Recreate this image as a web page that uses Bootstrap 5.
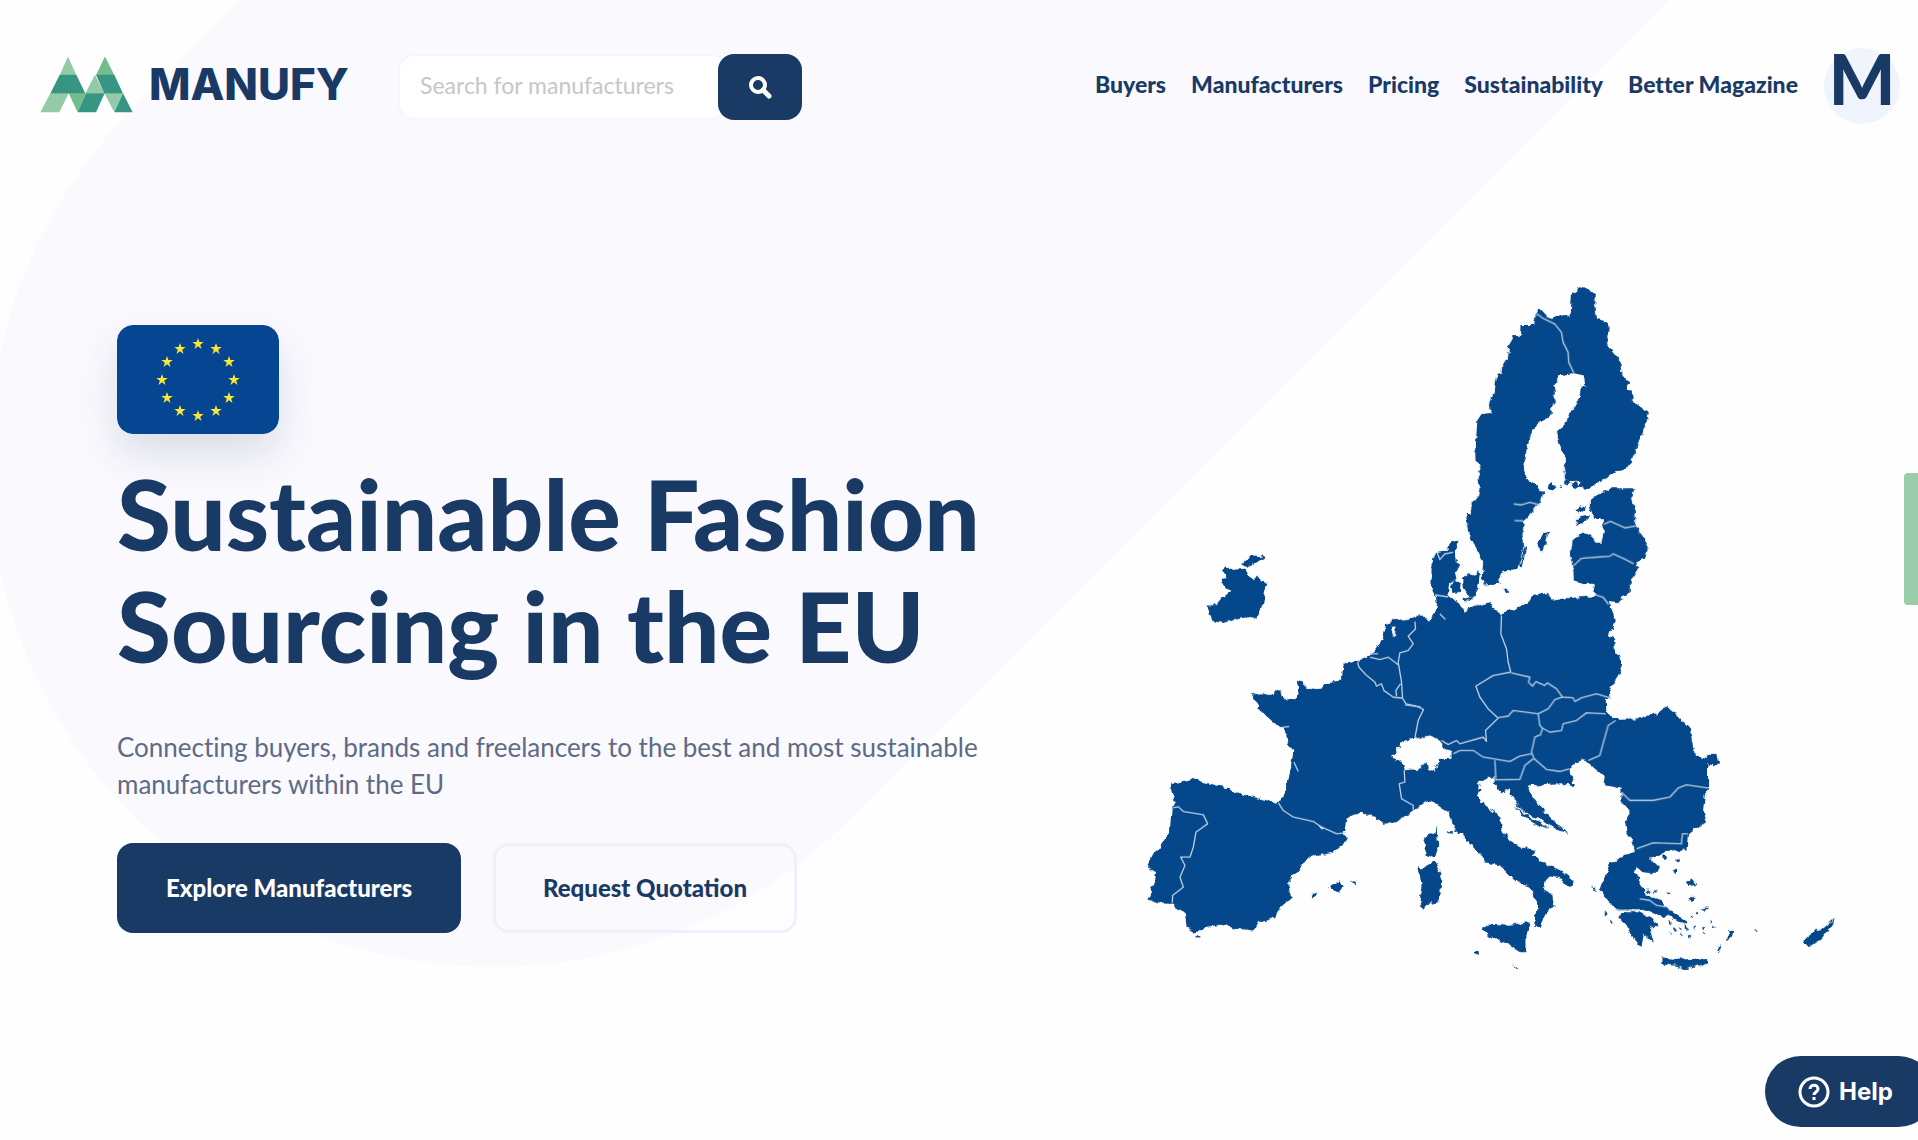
<!DOCTYPE html>
<html lang="en">
<head>
<meta charset="utf-8">
<meta name="viewport" content="width=device-width, initial-scale=1">
<title>Manufy</title>
<link href="https://cdn.jsdelivr.net/npm/bootstrap@5.3.0/dist/css/bootstrap.min.css" rel="stylesheet">
<style>
:root{--navy:#1a3a66}
body{font-family:Lato,"Open Sans",sans-serif;font-variant-ligatures:none;color:var(--navy);background:#fefefe}
.page-wrap{position:relative;min-height:100vh;overflow:hidden}
.blob{position:absolute;left:-12px;top:-43px;width:2200px;height:1010px;border-radius:505px;background:#faf9fe;transform-origin:505px 505px;transform:rotate(-45deg);z-index:0}
.page-wrap>header,.page-wrap>main{position:relative;z-index:1}
.site-header{padding:48px 18px 0 40px}
.brand-block{padding-top:6px}
.brand-link{padding-bottom:6px}
.brand-mark{width:93px;height:57px}
.brand-name{font:800 44px/48px Inter,sans-serif;color:var(--navy);width:204px}
.search-box{margin-left:47px}
.search-box .form-control{width:326px;height:62px;border:0;border-radius:14px;padding:0 20px 4px;font-size:23px;background:#fff;box-shadow:0 0 3px #ecebf7;margin-right:-8px}
.search-box .form-control::placeholder{color:#c6c6c8;opacity:1}
.search-box .btn{width:84px;height:66px;border-radius:16px;background:var(--navy);z-index:2}
.main-nav{gap:25px;margin-right:26px}
.main-nav .nav-link{padding:0;font-size:23px;line-height:32px;font-weight:900;color:var(--navy);white-space:nowrap}
.avatar{width:76px;height:76px;border-radius:50%;background:#eff4fd;font-size:70px;line-height:60px;font-weight:900;color:var(--navy);text-decoration:none}
.hero{padding:201px 68px 0 117px}
.flag{width:162px;height:109px;border-radius:16px;box-shadow:0 20px 40px rgba(26,58,102,.14);display:block}
.hero h1{font-size:98px;line-height:112px;font-weight:900;margin:23px 0 0}
.hero p{font-size:26px;line-height:37px;color:#5d6b86;margin:48px 0 40px}
.cta{height:90px;border-radius:16px;font-size:24px;font-weight:900;border-width:3px}
.cta-main,.cta-main:hover{background:var(--navy);color:#fff;width:344px}
.cta-alt,.cta-alt:hover{border-color:#f1effc;color:var(--navy);width:304px}
.map{width:37vw;margin-top:-46px;flex:none}
.side-tab{position:absolute;right:-8px;top:473px;width:22px;height:132px;border:0;border-radius:4px;background:#9bcdab;z-index:3}
.help{position:absolute;right:-16px;bottom:13px;height:71px;width:169px;border:0;border-radius:36px;background:var(--navy);color:#fff;font:700 24px/32px Inter,sans-serif;z-index:3;padding:0 0 0 32px}
</style>
</head>
<body>
<div class="page-wrap">
<div class="blob"></div>
<header class="site-header d-flex align-items-start justify-content-between">
  <div class="brand-block d-flex align-items-center">
    <a href="#" class="brand-link d-flex align-items-center text-decoration-none" aria-label="Manufy home">
      <svg class="brand-mark" viewBox="119 107 279 170"><g>
        <path fill="#93cba8" d="M203 108l25 56h-50zM150 218h55l-28 57h-57zM284 163l28 56h-57zM312 218h56l-26 57z"/>
        <path fill="#72bd8a" d="M205 218h52l-25 57zM314 108l28 56h-55z"/>
        <path fill="#379683" d="M178 163h50l27 56H150zM287 163h55l26 56h-56zM257 218h56l-26 57h-55zM368 218l29 57h-55z"/></g></svg>
      <span class="brand-name ms-3">MANUFY</span>
    </a>
    <form class="search-box d-flex align-items-center" onsubmit="return false">
      <input class="form-control" type="search" placeholder="Search for manufacturers" aria-label="Search for manufacturers">
      <button class="btn d-flex align-items-center justify-content-center" type="submit" aria-label="Search"><svg width="24" height="24" viewBox="0 0 24 24" fill="none" stroke="#fff" stroke-width="4"><circle cx="10" cy="10" r="7"/><path d="M15 15l6 6" stroke-width="5" stroke-linecap="round"/></svg></button>
    </form>
  </div>
  <div class="d-flex align-items-center">
    <nav class="main-nav d-flex pb-1">
      <a class="nav-link" href="#">Buyers</a><a class="nav-link" href="#">Manufacturers</a><a class="nav-link" href="#">Pricing</a><a class="nav-link" href="#">Sustainability</a><a class="nav-link" href="#">Better Magazine</a>
    </nav>
    <a class="avatar text-center" href="#">M</a>
  </div>
</header>
<main class="hero d-flex justify-content-between align-items-start">
  <div>
    <svg class="flag" viewBox="0 0 162 109" role="img" aria-label="European Union">
      <defs><path id="st" fill="#fbe635" d="M0-6L1.4-1.9H5.7L2.2.7 3.5 4.9 0 2.3-3.5 4.9-2.2.7-5.7-1.9H-1.4z"/></defs>
      <rect width="162" height="109" rx="16" fill="#064592"/>
      <g transform="translate(81 55)"><use href="#st" y="-36"/><use href="#st" x="18" y="-31"/><use href="#st" x="31" y="-18"/><use href="#st" x="36"/><use href="#st" x="31" y="18"/><use href="#st" x="18" y="31"/><use href="#st" y="36"/><use href="#st" x="-18" y="31"/><use href="#st" x="-31" y="18"/><use href="#st" x="-36"/><use href="#st" x="-31" y="-18"/><use href="#st" x="-18" y="-31"/></g>
    </svg>
    <h1>Sustainable Fashion<br>Sourcing in the EU</h1>
    <p>Connecting buyers, brands and freelancers to the best and most sustainable<br>manufacturers within the EU</p>
    <div class="d-flex"><button class="btn cta cta-main me-4" type="button">Explore Manufacturers</button><button class="btn cta cta-alt ms-2" type="button">Request Quotation</button></div>
  </div>
  <svg class="map" viewBox="1140 280 710 700" role="img" aria-label="Map of the European Union">
    <defs><filter id="coast" x="0" y="0" width="1" height="1" color-interpolation-filters="sRGB"><feTurbulence type="fractalNoise" baseFrequency=".16" numOctaves="2" seed="4"/><feDisplacementMap in="SourceGraphic" scale="6" xChannelSelector="R" yChannelSelector="G"/></filter></defs>
    <g fill="#05478b" filter="url(#coast)">
    <g transform="translate(1400 270) scale(.33333)">
      <path d="M420 118L450 150 482 135 512 145 516 75 535 60 552 50 565 62 588 75 586 110 592 150 615 155 630 175 622 225 645 255 665 280 668 320 685 340 683 360 700 362 697 400 720 410 747 430 740 465 715 530 700 565 680 600 650 608 600 640 560 660 530 655 540 640 500 635 492 600 495 570 480 530 472 490 495 465 520 420 540 380 543 350 556 352 553 320 522 313 475 320 475 340 460 350 465 372 460 380 468 400 455 420 450 445 425 458 400 480 390 505 380 540 372 600 380 632 410 645 430 670 425 695 405 720 385 740 372 760 368 800 370 840 358 880 352 903 305 910 295 935 300 945 255 950 245 925 250 885 240 865 220 820 205 790 198 735 212 735 215 705 235 680 240 650 233 620 245 600 230 580 228 520 232 455 245 435 272 432 270 405 285 360 293 315 308 310 310 285 325 260 328 230 340 202 360 200 362 168 403 168 408 135z"/>
      <path d="M570 695L600 672 640 658 703 658 697 690 708 740 705 770 722 790 747 835 735 870 710 880 712 905 690 945 690 975 670 985 655 1003 630 1000 620 1020 600 1020 585 975 580 945 555 945 522 935 520 890 513 860 518 815 550 790 575 800 590 822 605 822 612 790 605 750 590 750 578 735 570 715z"/>
      <path d="M525 750L568 738 560 755 533 768zM527 722L545 708 557 722 540 734zM448 788L425 800 415 825 425 852 437 825zM380 832L374 834 358 892 366 892zM440 655L455 640 470 655 455 664zM310 955L328 965 318 972z"/>
      <path d="M492 640l14-8 6 12-10 6zM515 648l14-8 6 12-12 8zM476 652l8-4v8z"/>
    </g>
    <g transform="translate(1180 530) scale(.33333)">
      <path d="M240 540L230 505 250 492 283 500 283 488 305 488 310 510 350 515 355 470 350 453 372 460 375 475 415 488 430 468 470 458 485 450 492 405 530 398 570 382 590 360 610 325 618 290 635 275 690 270 710 262 740 265 752 278 765 255 775 250 768 205 755 180 755 110 765 70 805 62 808 45 835 32 833 60 825 70 828 100 845 108 825 130 830 150 808 160 805 190 815 215 840 235 850 250 890 230 925 225 945 240 960 255 990 270 990 540z"/>
      <path d="M812 165L825 152 842 165 840 190 818 193zM850 150L865 133 885 140 900 130 895 180 880 205 868 205 852 180zM848 203L882 208 872 216 852 212z"/>
      <path d="M135 115L150 120 170 125 195 122 205 140 222 150 235 140 245 158 262 165 255 185 248 235 240 245 228 270 200 265 160 275 130 282 105 278 85 255 90 245 82 230 110 228 130 205 155 185 125 165 122 150 140 148 130 125zM185 105L210 82 240 85 248 76 253 88 235 97 210 115z"/>
    </g>
    <g transform="translate(1140 600) scale(.33333)">
      <path d="M335 290L360 287 400 292 405 280 425 280 428 302 473 305 475 265 470 243 495 250 497 268 540 278 550 258 600 245 610 225 612 195 650 190 690 170 715 145 735 110 740 75 760 65 820 60 830 50 870 65 885 48 895 0 940 0 965 25 975 40 1010 22 1050 10 1065 40 1085 45 1150 20 1180 0 1200 0 1200 555 1165 560 1160 575 1175 595 1200 625 1200 650 1150 615 1110 570 1085 585 1065 550 1065 538 1040 540 1012 552 1022 572 1015 590 1020 620 1070 660 1090 710 1130 745 1185 752 1178 770 1200 780 1200 985 1185 980 1195 920 1170 865 1135 830 1100 815 1080 797 1040 785 985 730 965 700 940 690 930 640 880 608 860 605 820 635 790 655 770 670 735 675 700 652 655 640 620 660 612 700 620 730 580 762 510 775 470 820 445 850 445 880 460 895 430 915 405 955 355 970 340 995 290 990 250 980 190 988 170 1003 140 985 135 945 100 915 60 915 22 905 45 850 48 820 30 810 22 800 40 765 60 745 90 695 95 630 105 615 93 553 145 548 160 535 185 548 250 565 300 585 360 600 410 612 425 605 440 555 455 490 460 460 430 390 400 370 355 330 360 315 345 305z"/>
      <path d="M890 683L895 740 885 780 865 770 852 735 858 710 886 705zM835 800L845 812 885 790 905 825 900 910 870 915 855 930 838 915 845 860zM568 865L600 845 612 865 595 882zM632 843L652 850 648 860zM512 890L530 885 520 900zM1025 990L1045 978 1090 980 1170 970 1160 1010 1160 1060 1140 1060 1100 1035 1045 1010zM170 1012h8v7h-8zM1005 1058h9v8h-9zM1117 1098l14 8v6zM925 697h14v7h-14z"/>
      <path fill="#fefefe" d="M757 470L795 425 850 415 870 410 905 425 910 450 935 460 935 480 925 490 895 492 885 518 865 510 860 490 845 508 795 515 785 480 765 488zM752 80L768 86 762 95 770 112 758 110zM535 680L556 685 545 692z"/>
    </g>
    <g transform="translate(1440 580) scale(.33333)">
      <path d="M185 105L250 80 285 50 325 42 335 65 380 58 470 52 510 70 525 125 508 170 523 180 525 210 550 262 535 290 510 330 512 358 498 365 500 400 525 420 600 418 655 402 680 382 700 400 750 450 765 530 785 540 805 525 830 525 835 550 820 562 805 560 805 630 795 650 790 700 803 730 780 740 745 765 740 815 700 818 670 822 655 835 630 840 660 870 640 885 610 880 590 865 585 880 605 925 620 950 665 965 690 995 745 1030 735 1038 680 1005 670 1015 640 1000 600 992 530 995 505 965 480 935 500 880 510 855 545 840 555 825 585 820 580 790 560 760 555 725 570 700 545 670 545 630 500 620 490 590 440 548 430 545 405 550 390 575 400 600 405 625 385 615 290 620 270 615 262 625 280 660 320 705 385 768 330 740 285 715 240 690 210 640 200 610 185 645 165 605 165 540 165 110z"/>
      <path d="M0 680L25 695 45 745 80 785 120 820 135 850 180 860 210 890 240 915 275 925 295 945 298 990 285 1010 280 1035 300 1042 320 1000 342 980 338 950 312 935 318 905 330 893 365 900 385 925 397 920 398 900 370 880 285 840 275 830 288 815 250 810 210 785 190 760 180 715 120 665 110 640 120 620 110 610 165 590 165 540 0 540z"/>
      <path d="M535 1015L560 1000 600 1000 640 1020 655 1045 630 1045 642 1092 612 1068 605 1105 575 1070 568 1050zM668 1158L668 1136 720 1143 805 1138 805 1154 770 1162 735 1172 715 1162zM1088 1085L1125 1055 1150 1050 1187 1018 1165 1055 1145 1080 1110 1103 1090 1095z"/>
      <path d="M738 910l18-10 14 18-20 4zM695 875l18-5-6 15zM750 955h14l-8 18zM785 992l22-3-12 10zM862 1085l4-28 14-6-2 22zM838 1098l5 14-8 14zM455 920l20 20-16-5zM495 995l12 12-12 6zM510 1020l14 12-10 3zM668 830h10v10h-10zM710 842h10v7h-10zM680 940l12 4-6 5zM640 935h16v6h-16zM620 935l14 4-10 8zM690 1022l8 14-8 4zM700 1045l10 6-8 6zM735 1040l14 10-14 4zM715 1045l10 4v6zM760 1048l8-6v10zM742 1072h12v6h-12zM785 1045h8v8h-8zM765 1000l14 3-12 5zM805 1022l14 8-8 4zM820 1040l12 8-8 2zM788 1065l8-4v8zM725 1062l8 4-8 4zM690 1060l8 4-8 4zM715 1015l10 4-8 4zM755 1010l6 8h-8zM945 1052h5v4h-5z"/>
      <path d="M225 680l50 40 60 32-40-12-40-22z"/>
    </g>
    </g>
    <g fill="none" stroke="#b9cfe3" stroke-width="4" stroke-linejoin="round">
    <g transform="translate(1400 270) scale(.33333)"><path d="M410 133L430 148 465 165 485 190 490 220 505 250 507 280 522 312M612 766L632 757 675 777 712 770M522 890L545 868 600 864 630 862 640 855 670 868 702 885M587 978L610 985 626 1006M342 705L365 708 390 700 420 708M344 755L370 756"/></g>
    <g transform="translate(1180 530) scale(.33333)"><path d="M705 278L707 300 685 322 700 345 685 365 660 372 655 400 660 430 665 460 668 508M570 385L600 392 625 385 645 400 655 408M533 400L537 415 560 440 585 460 590 472 605 465 612 485 640 505 668 508 678 525 722 535M662 465L648 485 650 502M765 198L805 204M570 375L595 375M780 255L797 272M772 72L780 92 795 75 820 70"/></g>
    <g transform="translate(1140 600) scale(.33333)"><path d="M95 628L115 624 130 638 190 648 203 675 168 700 160 745 150 775 122 775 135 800 120 835 130 865 98 890 97 912M415 612L430 635 460 655 520 668 545 685 590 705 618 702M793 515L795 550 778 555 785 600 820 620 820 635M795 318L835 324 851 332 835 365 825 418M905 425L925 437 950 425 960 435 1030 415 1040 428 1037 395 1075 358 1045 330 1020 295 1008 262 1060 230 1112 220M1085 50L1083 105 1100 150 1105 190 1113 220M448 383L430 385M462 490L475 518"/></g>
    <g transform="translate(1440 580) scale(.33333)"><path d="M213 282L270 295 266 310 278 322 288 308 315 320 322 312 350 330 368 355 400 357 405 368 425 357 470 345 512 358M368 355L345 362 325 390 295 405 220 395 205 412 175 416M295 405L300 440 308 448 330 460 365 455 370 435 410 425 440 402 498 405M308 448L302 468 285 475 275 520 283 540 320 572 360 578 390 570M40 525L60 515 100 515 130 535 210 548 240 532 275 525M165 545L168 603 240 602 255 560 280 540M528 425L505 440 480 530 445 545M545 640L570 665 640 665 690 655 715 628 740 618 805 628M590 810L640 792 725 795 728 765 745 765M525 992L540 995 600 993M600 960L630 965 650 980 680 985"/></g>
    </g>
  </svg>
</main>
<button class="side-tab" type="button" aria-label="Feedback"></button>
<button class="help d-flex align-items-center gap-2" type="button"><svg width="34" height="34" viewBox="0 0 34 34" fill="none" stroke="#fff" stroke-width="3"><circle cx="17" cy="17" r="14"/><path d="M13 14c0-5 8-5 8 0 0 3-4 3-4 6M17 22v3"/></svg><span>Help</span></button>
</div>
<script src="https://cdn.jsdelivr.net/npm/bootstrap@5.3.0/dist/js/bootstrap.bundle.min.js"></script>
</body>
</html>
